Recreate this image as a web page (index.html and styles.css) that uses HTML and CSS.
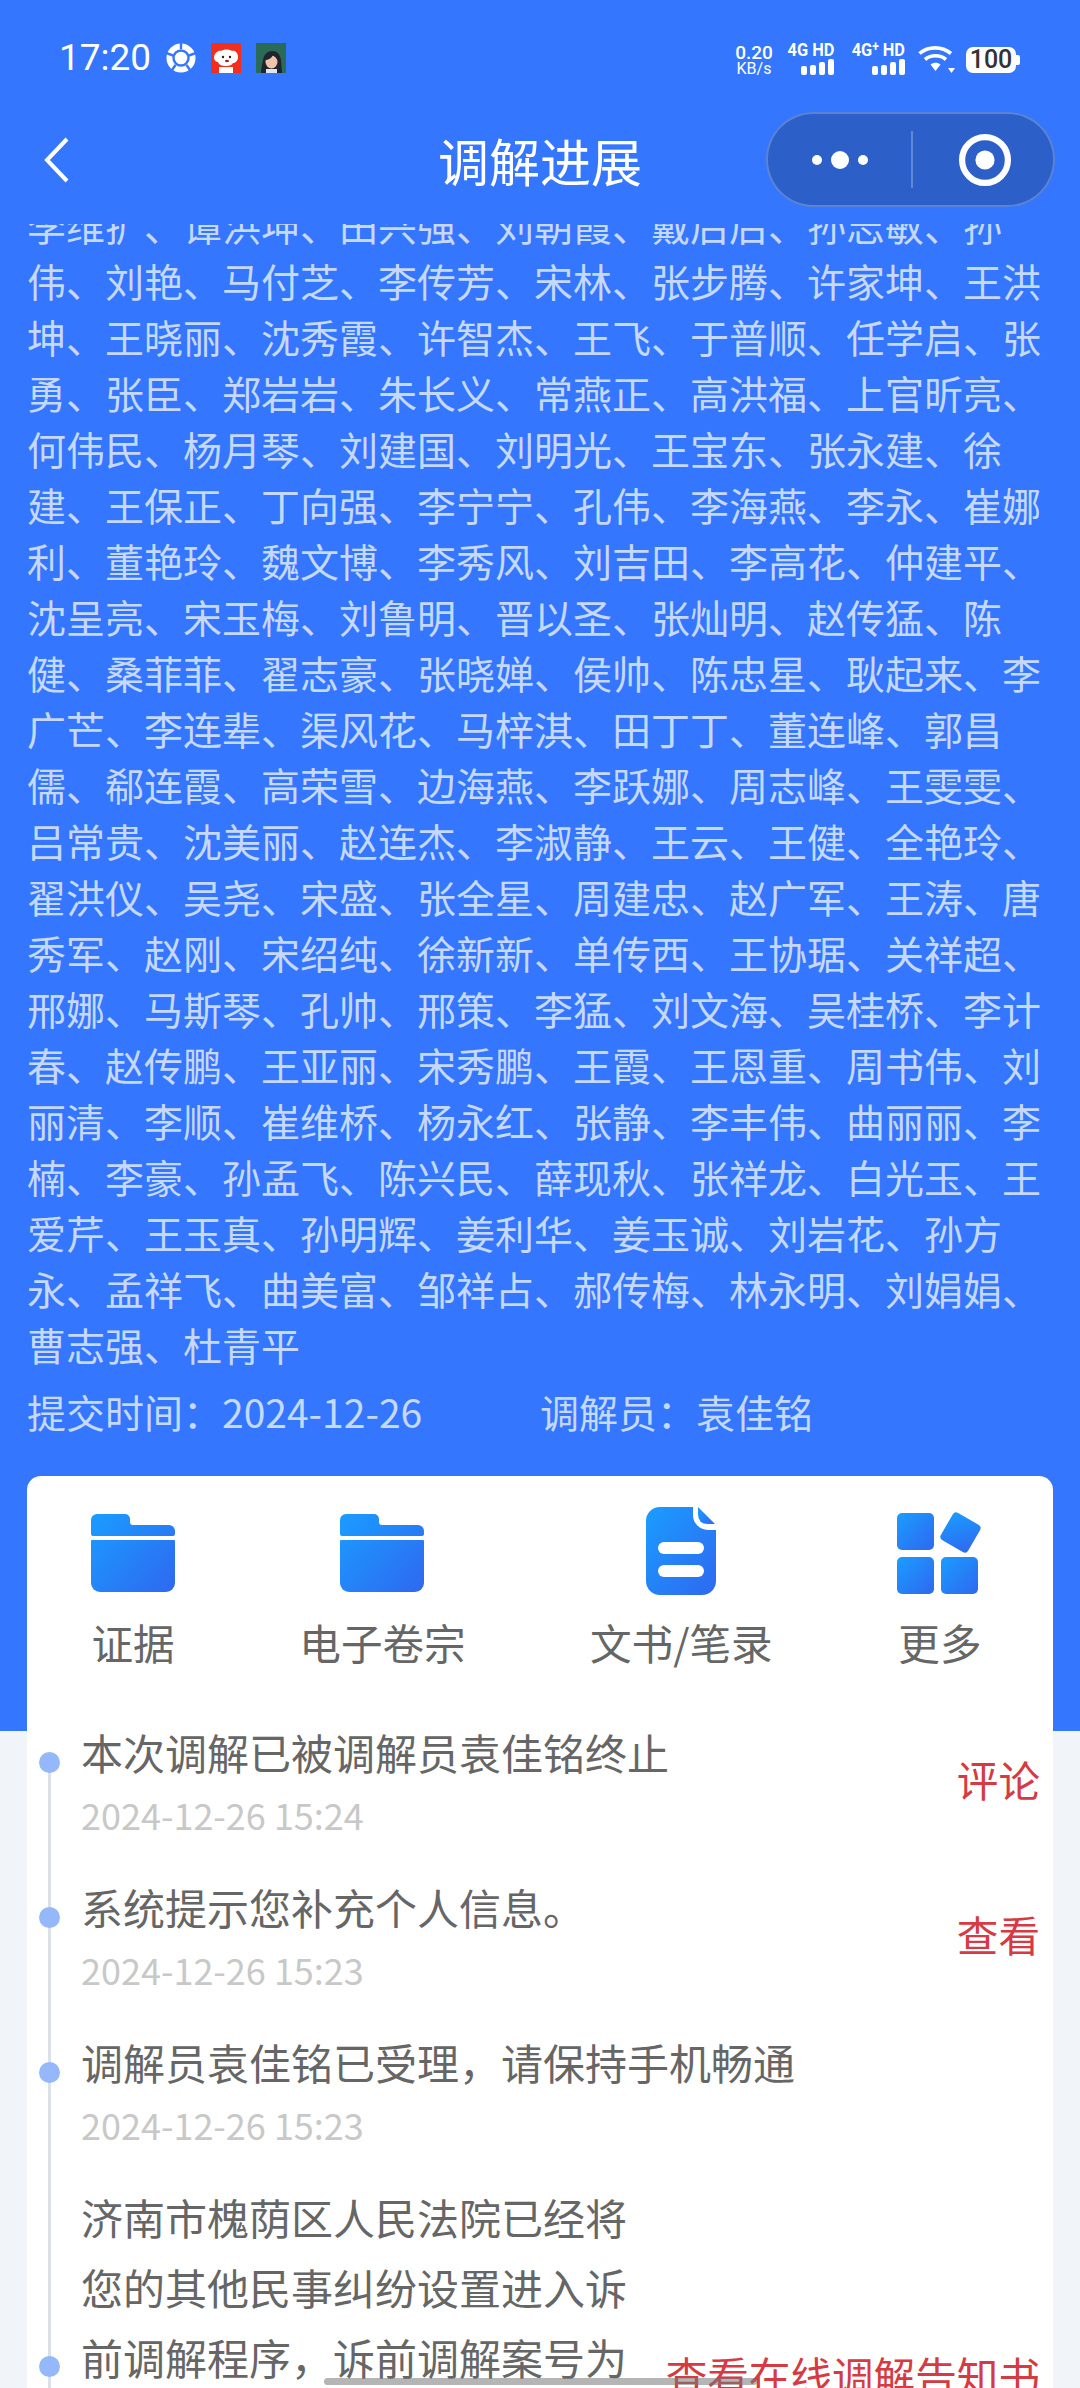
FILE: index.html
```html
<!DOCTYPE html>
<html lang="zh-CN">
<head>
<meta charset="utf-8">
<title>调解进展</title>
<link rel="stylesheet" href="styles.css">
</head>
<body>
<div class="page">
  <section class="hero">
    <div class="statusbar">
      <div class="status-left">
        <span class="clock">17:20</span>
        <svg class="notif" viewBox="0 0 30 30"><circle cx="15" cy="15" r="14.500" fill="#fff"/><circle cx="15" cy="15" r="7.500" fill="#fff" stroke="#3476FE" stroke-width="2.400"/><path d="M15 6V0M23 12.500L30 10M20.500 22L25 28.500M9.500 22L5 28.500M7 12.500L0 10" fill="none" stroke="#3476FE" stroke-width="2.400"/></svg>
        <svg class="notif" viewBox="0 0 30 30"><rect width="30" height="30" fill="#F22E1E"/><path d="M3 14c1-5 5-7 7-6 3-2 8-2 11 0 3-1 6 2 6 6s-3 6-5 6c-1 2-3 3-7 3s-7-1-8-4c-3 0-4-3-4-5z" fill="#fff"/><rect x="8" y="24" width="14" height="6" fill="#fff"/><circle cx="12" cy="14" r="1.200" fill="#222"/><circle cx="19" cy="14" r="1.200" fill="#222"/><ellipse cx="16" cy="18" rx="2" ry="1.200" fill="#A2222A"/></svg>
        <svg class="notif" viewBox="0 0 30 30"><rect width="30" height="30" fill="#2A6B57"/><path d="M5 30c0-4 1-8 2-13 1-6 5-9 9-9 5 0 8 3 9 9l1 13z" fill="#1F2530"/><ellipse cx="15.500" cy="19" rx="6" ry="6.500" fill="#F0C4A8"/><path d="M9 17c3 0 7-2 8-5 2 2 4 3 5 5l-1-6-7-1-5 3z" fill="#1F2530"/><rect x="10" y="26" width="11" height="4" fill="#DDE6EE"/></svg>
      </div>
      <div class="status-right">
        <div class="speed"><span class="speed-num">0.20</span><span class="speed-unit">KB/s</span></div>
        <div class="sim sim-a">
          <span class="sim-label">4G HD</span>
          <span class="bars"><i class="b1"></i><i class="b2"></i><i class="b3"></i><i class="b4"></i></span>
        </div>
        <div class="sim sim-b">
          <span class="sim-label">4G<sup>+</sup> HD</span>
          <span class="bars"><i class="b1"></i><i class="b2"></i><i class="b3"></i><i class="b4"></i></span>
        </div>
        <svg class="wifi" viewBox="0 0 37 29"><g fill="none" stroke="#fff" stroke-width="3.600"><path d="M1.500 8.500C10 1 24 1 33 8.500"/><path d="M7 14.500c6-5 15-5 21 0"/></g><path d="M12.500 19.500c3-2.400 7-2.400 10 0L17.500 26z" fill="#fff"/><path d="M30 23h7l-3.500 5z" fill="#fff"/></svg>
        <div class="battery"><span class="battery-body">100</span><span class="battery-tip"></span></div>
      </div>
    </div>

    <header class="navbar">
      <svg class="back" viewBox="0 0 26 46"><path d="M23 2L3 23l20 21" fill="none" stroke="#fff" stroke-width="4"/></svg>
      <h1 class="nav-title">调解进展</h1>
      <div class="capsule">
        <div class="capsule-more"><i class="dot-s"></i><i class="dot-l"></i><i class="dot-s"></i></div>
        <span class="capsule-sep"></span>
        <svg class="capsule-close" viewBox="0 0 52 52"><circle cx="26" cy="26" r="22.900" fill="none" stroke="#fff" stroke-width="6.200"/><circle cx="26" cy="26" r="9.600" fill="#fff"/></svg>
      </div>
    </header>

    <div class="names-clip">
      <p class="names">李维扩、谭洪坤、田兴强、刘朝霞、戴后后、孙志敏、孙伟、刘艳、马付芝、李传芳、宋林、张步腾、许家坤、王洪坤、王晓丽、沈秀霞、许智杰、王飞、于普顺、任学启、张勇、张臣、郑岩岩、朱长义、常燕正、高洪福、上官昕亮、何伟民、杨月琴、刘建国、刘明光、王宝东、张永建、徐建、王保正、丁向强、李宁宁、孔伟、李海燕、李永、崔娜利、董艳玲、魏文博、李秀风、刘吉田、李高花、仲建平、沈呈亮、宋玉梅、刘鲁明、晋以圣、张灿明、赵传猛、陈健、桑菲菲、翟志豪、张晓婵、侯帅、陈忠星、耿起来、李广芒、李连辈、渠风花、马梓淇、田丁丁、董连峰、郭昌儒、郗连霞、高荣雪、边海燕、李跃娜、周志峰、王雯雯、吕常贵、沈美丽、赵连杰、李淑静、王云、王健、全艳玲、翟洪仪、吴尧、宋盛、张全星、周建忠、赵广军、王涛、唐秀军、赵刚、宋绍纯、徐新新、单传西、王协琚、关祥超、邢娜、马斯琴、孔帅、邢策、李猛、刘文海、吴桂桥、李计春、赵传鹏、王亚丽、宋秀鹏、王霞、王恩重、周书伟、刘丽清、李顺、崔维桥、杨永红、张静、李丰伟、曲丽丽、李楠、李豪、孙孟飞、陈兴民、薛现秋、张祥龙、白光玉、王爱芹、王玉真、孙明辉、姜利华、姜玉诚、刘岩花、孙方永、孟祥飞、曲美富、邹祥占、郝传梅、林永明、刘娟娟、曹志强、杜青平</p>
    </div>
    <div class="meta">
      <span class="meta-time">提交时间：2024-12-26</span>
      <span class="meta-staff">调解员：袁佳铭</span>
    </div>
  </section>

  <main class="card">
    <div class="tools">
      <div class="tool">
        <svg class="tool-icon" viewBox="0 0 84 78"><use href="#folder"/></svg>
        <span class="tool-label">证据</span>
      </div>
      <div class="tool">
        <svg class="tool-icon" viewBox="0 0 84 78"><use href="#folder"/></svg>
        <span class="tool-label">电子卷宗</span>
      </div>
      <div class="tool">
        <svg class="tool-icon tool-icon-doc" viewBox="0 0 70 88"><path d="M14 0h33v8a15 15 0 0 0 15 15h8v51a14 14 0 0 1-14 14H14A14 14 0 0 1 0 74V14A14 14 0 0 1 14 0z" fill="url(#ig)"/><path d="M52 0l17 17h-7q-10 0-10-10z" fill="url(#ig)"/><rect x="12" y="35" width="46" height="12" rx="6" fill="#fff"/><rect x="12" y="58" width="46" height="12" rx="6" fill="#fff"/></svg>
        <span class="tool-label">文书/笔录</span>
      </div>
      <div class="tool">
        <svg class="tool-icon tool-icon-more" viewBox="0 0 86 87"><rect x="0" y="6" width="37" height="37" rx="5" fill="url(#ig)"/><rect x="0" y="50" width="37" height="37" rx="5" fill="url(#ig)"/><rect x="44" y="50" width="37" height="37" rx="5" fill="url(#ig)"/><rect x="47.700" y="9.700" width="31.500" height="31.500" rx="4" transform="rotate(30 63.500 25.500)" fill="url(#ig)"/></svg>
        <span class="tool-label">更多</span>
      </div>
    </div>

    <ul class="timeline">
      <li class="event event-first">
        <div class="event-body">
          <p class="event-title">本次调解已被调解员袁佳铭终止</p>
          <p class="event-time">2024-12-26 15:24</p>
        </div>
        <span class="event-action">评论</span>
      </li>
      <li class="event">
        <div class="event-body">
          <p class="event-title">系统提示您补充个人信息。</p>
          <p class="event-time">2024-12-26 15:23</p>
        </div>
        <span class="event-action">查看</span>
      </li>
      <li class="event">
        <div class="event-body">
          <p class="event-title">调解员袁佳铭已受理，请保持手机畅通</p>
          <p class="event-time">2024-12-26 15:23</p>
        </div>
      </li>
      <li class="event event-long">
        <div class="event-body">
          <p class="event-title">济南市槐荫区人民法院已经将您的其他民事纠纷设置进入诉前调解程序，诉前调解案号为</p>
        </div>
        <span class="event-action">查看在线调解告知书</span>
      </li>
    </ul>
  </main>

  <div class="home-bar"></div>
</div>

<svg class="defs" width="0" height="0" aria-hidden="true">
  <defs>
    <linearGradient id="ig" x1="0" y1="0" x2="1" y2="1">
      <stop offset="0" stop-color="#1A9DFF"/>
      <stop offset="1" stop-color="#2F68F0"/>
    </linearGradient>
    <linearGradient id="ig2" gradientUnits="userSpaceOnUse" x1="0" y1="0" x2="84" y2="78">
      <stop offset="0" stop-color="#1A9DFF"/>
      <stop offset="1" stop-color="#2F68F0"/>
    </linearGradient>
    <g id="folder">
      <path d="M6 0h28a5 5 0 0 1 5 5v3a3 3 0 0 0 3 3h36a6 6 0 0 1 6 6v3a2 2 0 0 1-2 2H2a2 2 0 0 1-2-2V6a6 6 0 0 1 6-6z" fill="url(#ig2)"/>
      <path d="M0 27a1 1 0 0 1 1-1h82a1 1 0 0 1 1 1v42a9 9 0 0 1-9 9H9a9 9 0 0 1-9-9z" fill="url(#ig2)"/>
    </g>
  </defs>
</svg>
</body>
</html>
```

FILE: styles.css
```css
* { box-sizing: border-box; }
html, body { margin: 0; padding: 0; height: 2388px; overflow: hidden; }
body { font-family: "Noto Sans CJK SC", "Noto Sans", sans-serif; background: #F1F4F9; }
p, h1, ul { margin: 0; padding: 0; }
ul { list-style: none; }
.defs { position: absolute; }

.page { position: relative; width: 1080px; height: 2388px; overflow: hidden; }

.hero { background: #3476FE; height: 1731px; color: #fff; }

/* status bar */
.statusbar { height: 112px; padding: 40px 60px 0 59px; display: flex; justify-content: space-between; align-items: flex-start; }
.status-left { display: flex; align-items: center; height: 36px; }
.clock { font-family: Roboto, sans-serif; font-size: 37px; line-height: 36px; width: 107px; }
.notif { width: 30px; height: 30px; margin-right: 15px; }
.status-right { display: flex; align-items: flex-start; }
.speed { display: flex; flex-direction: column; align-items: center; width: 38px; margin-right: 13px; padding-top: 4px; font-family: Roboto, sans-serif; }
.speed-num { font-size: 19px; line-height: 17px; font-weight: 500; }
.speed-unit { font-size: 16px; line-height: 16px; }
.sim { display: flex; flex-direction: column; align-items: flex-end; font-family: Roboto, sans-serif; }
.sim-a { width: 48px; margin-right: 11px; }
.sim-b { width: 60px; margin-right: 13px; }
.sim-label { font-size: 19px; line-height: 19px; font-weight: 700; white-space: nowrap; transform: scaleX(.86); transform-origin: right; }
.sim-label sup { font-size: 14px; line-height: 0; vertical-align: 5px; }
.bars { display: flex; align-items: flex-end; gap: 3px; height: 16px; }
.bars i { display: block; width: 6px; background: #fff; border-radius: 2px; }
.b1 { height: 9px; }
.b2 { height: 10px; }
.b3 { height: 13px; }
.b4 { height: 16px; }
.wifi { width: 37px; height: 29px; margin: 5px 11px 0 0; }
.battery { display: flex; align-items: center; margin-top: 7px; }
.battery-body { width: 50px; height: 26px; background: #fff; border-radius: 7px; color: #333; font-family: Roboto, sans-serif; font-size: 25px; font-weight: 500; line-height: 26px; text-align: center; }
.battery-tip { width: 4px; height: 10px; background: #fff; border-radius: 0 2px 2px 0; }

/* nav */
.navbar { position: relative; height: 96px; display: flex; align-items: center; justify-content: center; margin-bottom: 16px; }
.back { position: absolute; left: 44px; top: 25px; width: 26px; height: 46px; }
.nav-title { font-size: 51px; font-weight: 400; line-height: 96px; }
.capsule { position: absolute; right: 25px; top: 0; width: 289px; height: 95px; background: #2C60C8; border: 2px solid rgba(255, 255, 255, .22); border-radius: 48px; display: flex; align-items: center; }
.capsule-more { width: 143px; display: flex; justify-content: center; align-items: center; gap: 9px; }
.dot-s { width: 10px; height: 10px; background: #fff; border-radius: 50%; }
.dot-l { width: 18px; height: 18px; background: #fff; border-radius: 50%; }
.capsule-sep { width: 2px; height: 57px; background: rgba(255, 255, 255, .25); }
.capsule-close { width: 52px; height: 52px; margin-left: 46px; }

/* names */
.names-clip { height: 1149px; overflow: hidden; padding: 0 27px; }
.names { margin-top: -28px; font-size: 39px; line-height: 56px; color: rgba(255, 255, 255, .72); }
.meta { display: flex; padding: 10px 27px 0; font-size: 39px; line-height: 56px; color: rgba(255, 255, 255, .72); }
.meta-time { width: 513px; }

/* card */
.card { margin: -255px 27px 0; position: relative; background: #fff; border-radius: 14px 14px 0 0; height: 1000px; }
.tools { height: 242px; padding: 31px 70px 0 64px; display: flex; justify-content: space-between; }
.tool { display: flex; flex-direction: column; align-items: center; }
.tool-icon { width: 84px; height: 78px; margin-top: 7px; margin-bottom: 3px; }
.tool-icon-doc { width: 70px; height: 88px; margin-top: 0; margin-bottom: 0; }
.tool-icon-more { width: 86px; height: 87px; margin-top: 0; margin-bottom: 1px; }
.tool-label { font-size: 41.600px; line-height: 56px; color: #666; margin-top: 19px; white-space: nowrap; }

.event { position: relative; display: flex; align-items: center; padding: 0 13px 33px 54px; min-height: 155px; }
.event::before { content: ""; position: absolute; left: 21px; top: 0; bottom: 0; width: 3px; background: #DCE0E8; }
.event-first::before { top: 44px; }
.event::after { content: ""; position: absolute; left: 12px; top: 34px; width: 21px; height: 21px; border-radius: 50%; background: #94B8FA; }
.event-body { flex: 1; min-width: 0; padding-right: 26px; }
.event-title { font-size: 42px; line-height: 70px; color: #666; margin-top: -1px; }
.event-time { font-size: 36px; line-height: 52px; color: #C8C8C8; margin-top: 1px; }
.event-action { flex: none; font-size: 41.600px; line-height: 56px; color: #D63A42; }
.event-long { min-height: 386px; align-items: flex-start; padding-bottom: 0; }
.event-long .event-action { margin-top: 164px; }
.event-long::after { top: 173px; }

.home-bar { position: absolute; left: 324px; top: 2378px; width: 433px; height: 7px; border-radius: 4px; background: rgba(120, 120, 120, .55); }
```
